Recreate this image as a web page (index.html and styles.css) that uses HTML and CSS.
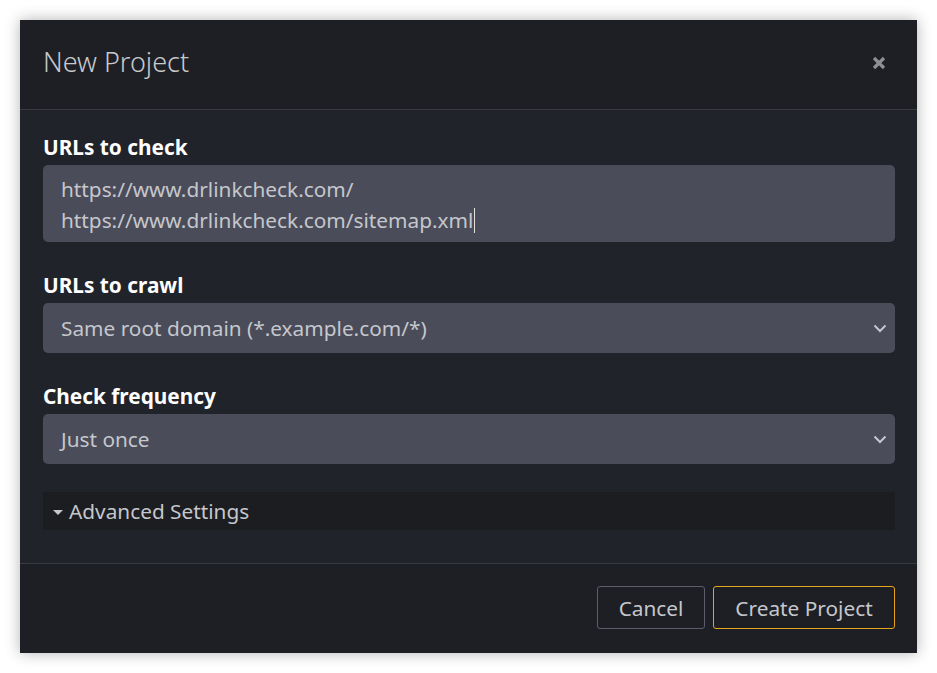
FILE: index.html
```html
<!DOCTYPE html>
<html lang="en">
<head>
    <meta charset="UTF-8">
    <meta name="viewport" content="width=device-width, initial-scale=1.0">
    <title>New Project</title>
    <link rel="stylesheet" href="styles.css">
</head>
<body>
    <div class="dialog">
        <div class="dialog-header">
            <h2 class="dialog-title">New Project</h2>
            <button class="close-btn" aria-label="Close">
                <svg width="14" height="14" viewBox="0 0 14 14">
                    <path d="M2 2 L12 12 M12 2 L2 12" stroke="#8e8f93" stroke-width="3.2" stroke-linecap="butt"/>
                </svg>
            </button>
        </div>

        <div class="dialog-body">
            <!-- URLs to check -->
            <div class="field">
                <label class="field-label">URLs to check</label>
                <div class="textarea">https://www.drlinkcheck.com/<br>https://www.drlinkcheck.com/sitemap.xml<span class="caret"></span></div>
            </div>

            <!-- URLs to crawl -->
            <div class="field">
                <label class="field-label">URLs to crawl</label>
                <div class="select">
                    <span>Same root domain (*.example.com/*)</span>
                    <svg class="chevron" width="14" height="9" viewBox="0 0 14 9">
                        <path d="M1.5 1.5 L7 7 L12.5 1.5" fill="none" stroke="#c5c7cc" stroke-width="2"/>
                    </svg>
                </div>
            </div>

            <!-- Check frequency -->
            <div class="field">
                <label class="field-label">Check frequency</label>
                <div class="select">
                    <span>Just once</span>
                    <svg class="chevron" width="14" height="9" viewBox="0 0 14 9">
                        <path d="M1.5 1.5 L7 7 L12.5 1.5" fill="none" stroke="#c5c7cc" stroke-width="2"/>
                    </svg>
                </div>
            </div>

            <div class="advanced">
                <span class="triangle"></span>
                <span>Advanced Settings</span>
            </div>
        </div>

        <div class="dialog-footer">
            <button class="btn btn-cancel">Cancel</button>
            <button class="btn btn-primary">Create Project</button>
        </div>
    </div>
</body>
</html>
```

FILE: styles.css
```css
body {
    font-family: "Noto Sans", "Open Sans", sans-serif;
    margin: 0;
    padding: 20px;
    background-color: #fff;
}
.dialog {
    width: 897px;
    height: 633px;
    background-color: #21232a;
    box-shadow: 0 0 14px rgba(0, 0, 0, 0.3);
    display: flex;
    flex-direction: column;
}
.dialog-header {
    height: 90px;
    box-sizing: border-box;
    padding: 0 22px 7px 23px;
    display: flex;
    align-items: center;
    justify-content: space-between;
    background-color: #1e1f24;
    border-bottom: 1px solid #393a40;
}
.dialog-title {
    margin: 0;
    font-size: 27px;
    font-weight: 300;
    color: #c8c9cc;
}
.close-btn {
    background: none;
    border: none;
    padding: 0;
    margin-right: 9px;
    margin-top: 4px;
    width: 14px;
    height: 14px;
    cursor: pointer;
    display: flex;
}
.dialog-body {
    flex: 1;
    padding: 22px 22px 0 23px;
    display: flex;
    flex-direction: column;
    gap: 28px;
}
.field {
    display: flex;
    flex-direction: column;
}
.field-label {
    font-size: 20.8px;
    font-weight: 700;
    line-height: 30px;
    color: #fff;
    margin-bottom: 3px;
}
.textarea {
    height: 77px;
    box-sizing: border-box;
    padding: 9px 18px;
    background-color: #4a4c5a;
    border-radius: 5px;
    font-size: 20.8px;
    line-height: 31px;
    color: #c5c7cc;
}
.caret {
    display: inline-block;
    width: 0;
    height: 25px;
    border-left: 1.5px solid #e0e0e0;
    vertical-align: -5px;
    margin-left: 1px;
}
.select {
    height: 50px;
    box-sizing: border-box;
    padding: 0 8px 0 18px;
    background-color: #4a4c5a;
    border-radius: 5px;
    font-size: 20.8px;
    color: #c5c7cc;
    display: flex;
    align-items: center;
    justify-content: space-between;
}
.chevron {
    margin-top: 1px;
}
.advanced {
    height: 38px;
    padding-left: 10px;
    background-color: #1c1d21;
    font-size: 20.8px;
    color: #c5c7cc;
    display: flex;
    align-items: center;
    gap: 6px;
}
.triangle {
    width: 0;
    height: 0;
    border-left: 5px solid transparent;
    border-right: 5px solid transparent;
    border-top: 5px solid #c5c7cc;
    margin-top: 3px;
}
.dialog-footer {
    height: 90px;
    box-sizing: border-box;
    padding: 22px 22px 0 0;
    background-color: #1e1f24;
    border-top: 1px solid #393a40;
    display: flex;
    justify-content: flex-end;
    align-items: flex-start;
    gap: 8px;
}
.btn {
    height: 43px;
    padding: 0;
    font-family: inherit;
    font-size: 20.8px;
    color: #c5c7cc;
    background-color: #1e1f24;
    border-radius: 3px;
    cursor: pointer;
}
.btn-cancel {
    width: 108px;
    border: 1px solid #5a5e6b;
}
.btn-primary {
    width: 182px;
    border: 1px solid #e8a31c;
}
```
